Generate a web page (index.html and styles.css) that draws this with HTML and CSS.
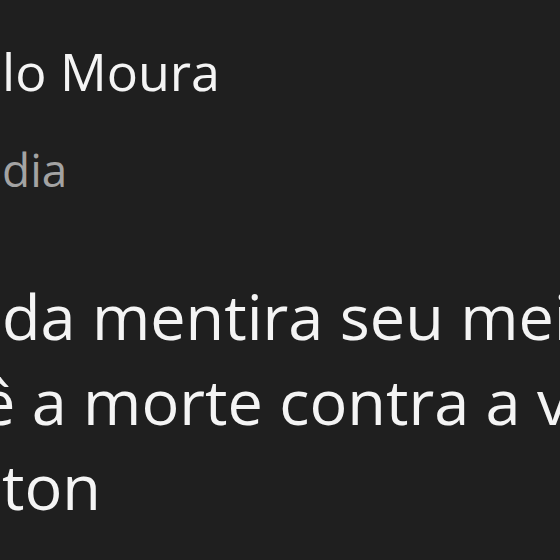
FILE: index.html
```html
<!DOCTYPE html>
<html lang="pt">
<head>
<meta charset="utf-8">
<link rel="stylesheet" href="styles.css">
</head>
<body>
<div class="comment">
  <div class="name">lo Moura</div>
  <div class="time">dia</div>
  <div class="text">
    <div class="line">da mentira seu mei</div>
    <div class="line cut">ê a morte contra a v</div>
    <div class="line">ton</div>
  </div>
</div>
</body>
</html>
```
FILE: styles.css
```css
html, body {
  margin: 0;
  padding: 0;
  width: 560px;
  height: 560px;
  overflow: hidden;
  background: #1f1f1f;
}
.comment {
  font-family: "Open Sans", "Noto Sans", sans-serif;
  color: #f4f4f4;
  padding-left: 2px;
}
.name {
  font-size: 52px;
  line-height: 76px;
  margin-top: 33px;
  white-space: nowrap;
}
.time {
  font-size: 46px;
  line-height: 70px;
  margin-top: 25px;
  color: #a3a3a3;
}
.text {
  margin-top: 69px;
  font-size: 63px;
  line-height: 85px;
}
.line {
  white-space: nowrap;
}
.cut {
  margin-left: -22px;
}
```
